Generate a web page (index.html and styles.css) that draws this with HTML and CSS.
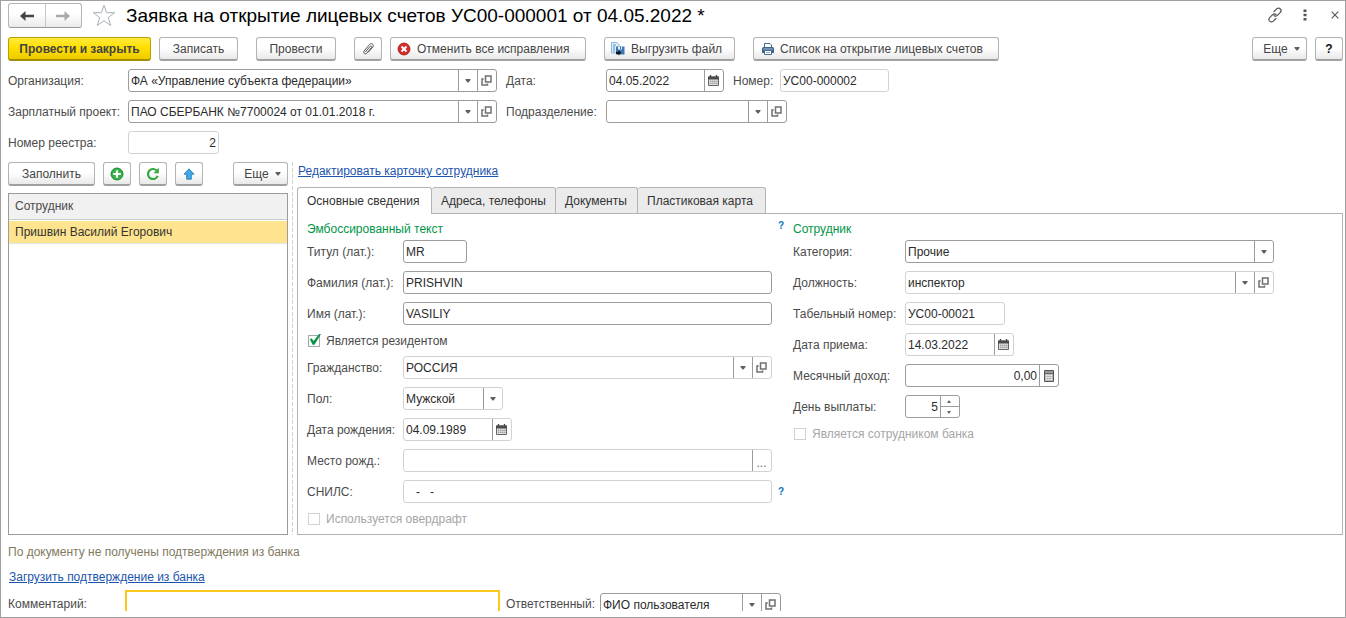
FILE: index.html
```html
<!DOCTYPE html>
<html lang="ru">
<head>
<meta charset="utf-8">
<title>Заявка на открытие лицевых счетов</title>
<link rel="stylesheet" href="styles.css">
</head>
<body>
<svg class="sprite" aria-hidden="true">
  <symbol id="i-down" viewBox="0 0 6 4"><path d="M.5 0h5v1L3.500 3.500h-1L.5 1z" fill="#606060"/></symbol>
  <symbol id="i-open" viewBox="0 0 11 11"><path d="M4.500 1h5.500v6H4.500z" fill="none" stroke="#707070" stroke-width="1.500"/><path d="M2.700 4H1v6h5.500V8.600" fill="none" stroke="#707070" stroke-width="1.500"/></symbol>
  <symbol id="i-cal" viewBox="0 0 11 11"><path d="M.5 2h10v8.500H.5z" fill="#ddd" stroke="#666"/><path d="M0 1.500h11V4.500H0z" fill="#4c4c4c"/><path d="M2.500 0v2M8.500 0v2" stroke="#4c4c4c" stroke-width="1.400"/><path d="M2 6.300h7.500M2 8.400h7.500" stroke="#999" stroke-width="1.200" stroke-dasharray="1.300 .8"/></symbol>
  <symbol id="i-calc" viewBox="0 0 10 12"><path d="M.5.5h9v11h-9z" fill="#bbb" stroke="#555"/><path d="M1 1h8v2.500H1z" fill="#999"/><path d="M0 3.500h10" stroke="#555" stroke-width=".8"/><path d="M2 5.500h6M2 7.500h6M2 9.500h6" stroke="#f4f4f4" stroke-width="1.200" stroke-dasharray="1.400 .9"/></symbol>
</svg>

<main class="window">
  <header class="titlebar">
    <div class="nav">
      <button type="button" aria-label="Назад"><svg width="16" height="12" viewBox="0 0 16 12"><path d="M1 6L6.500 1v3.700H15v2.600H6.500V11z" fill="#444"/></svg></button>
      <button type="button" aria-label="Вперед"><svg width="16" height="12" viewBox="0 0 16 12"><path d="M15 6L9.500 1v3.700H1v2.600h8.500V11z" fill="#aaa"/></svg></button>
    </div>
    <button type="button" class="plain star" aria-label="В избранное"><svg width="24" height="23" viewBox="0 0 24 23"><path d="M12 1.300l2.600 7.400h8l-6.300 4.900 2.400 7.900L12 16.800l-6.700 4.700 2.400-7.900L1.400 8.700h8z" fill="#fff" stroke="#a9b0ba"/></svg></button>
    <h1>Заявка на открытие лицевых счетов УС00-000001 от 04.05.2022 *</h1>
    <div class="window-tools">
      <button type="button" class="plain" aria-label="Ссылка"><svg width="16" height="16" viewBox="0 0 16 16"><g fill="none" stroke="#555" stroke-width="1.200" stroke-linecap="round"><path d="M7 4.500L9.700 1.900c1.200-1.200 2.700-1 3.600-.1s1.100 2.400 0 3.600L10.400 8.300c-1 1-2.500 1-3.400.2"/><path d="M9 11.500L6.300 14.100c-1.200 1.200-2.700 1-3.600.1s-1.100-2.400 0-3.600L5.600 7.700c1-1 2.500-1 3.400-.2"/></g></svg></button>
      <button type="button" class="plain" aria-label="Меню"><svg width="4" height="12" viewBox="0 0 4 12"><path d="M.5.5h3v2.500h-3zM.5 4.700h3v2.500h-3zM.5 9h3v2.500h-3z" fill="#555"/></svg></button>
      <button type="button" class="plain close" aria-label="Закрыть"><svg width="8" height="8" viewBox="0 0 8 8"><path d="M.7.7l6.600 6.600M7.300.7L.7 7.300" stroke="#555" stroke-width="1.100"/></svg></button>
    </div>
  </header>

  <div class="commands">
    <div class="group">
      <button type="button" class="btn primary">Провести и закрыть</button>
      <button type="button" class="btn w79">Записать</button>
    </div>
    <button type="button" class="btn w80">Провести</button>
    <div class="group">
      <button type="button" class="btn w28" aria-label="Файлы"><svg width="12" height="14" viewBox="0 0 12 14"><path d="M3.500 9.800l4.700-5.500c.8-1 2.200.1 1.400 1.100L4.800 11.200c-1.500 1.800-4.200-.3-2.700-2.200l5.400-6.500c2-2.300 5.200.3 3.300 2.600L6.500 10" fill="none" stroke="#555" stroke-linecap="round"/></svg></button>
      <button type="button" class="btn cancel"><svg width="14" height="14" viewBox="0 0 14 14"><circle cx="7" cy="7" r="6" fill="#d42b2b" stroke="#a31616" stroke-width=".8"/><path d="M4.500 4.500l5 5M9.500 4.500l-5 5" stroke="#fff" stroke-width="2"/></svg>Отменить все исправления</button>
    </div>
    <button type="button" class="btn export"><svg width="14" height="14" viewBox="0 0 14 14"><path d="M.5.5H6l2 2V11H.5z" fill="#dcecf8" stroke="#8fb4d4"/><path d="M2 3h3M2 5h2M2 7h2M2 9h2" stroke="#5b93c4"/><path d="M5 4.500h8.500v8H5z" fill="#3c78b4"/><path d="M7 4.500h4v3H7z" fill="#e6f1fa"/><path d="M9.500 4.500v2.500" stroke="#2f6ca8"/><path d="M5 9.700h2.500V8.200l2.800 2.600-2.800 2.700V12H5z" fill="#111"/></svg>Выгрузить файл</button>
    <button type="button" class="btn print"><svg width="12" height="12" viewBox="0 0 12 12"><path d="M2.500 4V.5h5.500l1.500 1.500V4" fill="#fff" stroke="#49698c"/><path d="M0 5.500Q0 4 1.500 4h9Q12 4 12 5.500V10H0z" fill="#3c6490"/><path d="M1.500 6h9" stroke="#a9c2dc"/><path d="M2.500 7.500h7v4h-7z" fill="#fff" stroke="#49698c"/><path d="M4 9.500h4" stroke="#8ba5c0"/></svg>Список на открытие лицевых счетов</button>
    <div class="group end">
      <button type="button" class="btn more">Еще <svg width="6" height="4"><use href="#i-down"/></svg></button>
      <button type="button" class="btn w28 help-btn">?</button>
    </div>
  </div>

  <section class="head-form">
    <label for="org">Организация:</label>
    <div class="field"><input id="org" value="ФА «Управление субъекта федерации»"><button type="button" aria-label="Выбрать"><svg width="6" height="4"><use href="#i-down"/></svg></button><button type="button" aria-label="Открыть"><svg width="11" height="11"><use href="#i-open"/></svg></button></div>
    <label for="date" class="second">Дата:</label>
    <div class="inline">
      <div class="field w118"><input id="date" value="04.05.2022"><button type="button" aria-label="Календарь"><svg width="11" height="11"><use href="#i-cal"/></svg></button></div>
      <label for="num">Номер:</label>
      <div class="field soft w109"><input id="num" value="УС00-000002"></div>
    </div>

    <label for="proj">Зарплатный проект:</label>
    <div class="field"><input id="proj" value="ПАО СБЕРБАНК №7700024 от 01.01.2018 г."><button type="button" aria-label="Выбрать"><svg width="6" height="4"><use href="#i-down"/></svg></button><button type="button" aria-label="Открыть"><svg width="11" height="11"><use href="#i-open"/></svg></button></div>
    <label for="dept" class="second">Подразделение:</label>
    <div class="field w181"><input id="dept"><button type="button" aria-label="Выбрать"><svg width="6" height="4"><use href="#i-down"/></svg></button><button type="button" aria-label="Открыть"><svg width="11" height="11"><use href="#i-open"/></svg></button></div>

    <label for="reg">Номер реестра:</label>
    <div class="field soft w91"><input id="reg" class="num" value="2"></div>
  </section>

  <section class="work">
    <div class="staff">
      <div class="staff-tools">
        <button type="button" class="btn fill">Заполнить</button>
        <button type="button" class="btn w28" aria-label="Добавить"><svg width="14" height="14" viewBox="0 0 14 14"><circle cx="7" cy="7" r="6" fill="#35b045" stroke="#1c8a30"/><path d="M7 3.200v7.600M3.200 7h7.600" stroke="#fff" stroke-width="2.200"/></svg></button>
        <button type="button" class="btn w28" aria-label="Обновить"><svg width="14" height="14" viewBox="0 0 14 14"><path d="M10.400 3.300A5 5 0 1 0 11.700 8.800" fill="none" stroke="#31a93f" stroke-width="2.200"/><path d="M12.800.8v5.400H7.500z" fill="#31a93f"/></svg></button>
        <button type="button" class="btn w28" aria-label="Вверх"><svg width="12" height="12" viewBox="0 0 12 12"><path d="M6 .8l5 5.400H8.300v5H3.700v-5H1z" fill="#3fa9ea" stroke="#2c7fb8" stroke-width=".9"/></svg></button>
        <button type="button" class="btn more end">Еще <svg width="6" height="4"><use href="#i-down"/></svg></button>
      </div>
      <div class="list">
        <table>
          <thead><tr><th scope="col">Сотрудник</th></tr></thead>
          <tbody><tr><td>Пришвин Василий Егорович</td></tr></tbody>
        </table>
      </div>
    </div>
    <div class="splitter"></div>
    <div class="card">
      <a href="#card" class="card-link">Редактировать карточку сотрудника</a>
      <div class="tabs" role="tablist">
        <button type="button" role="tab" aria-selected="true" class="tab active">Основные сведения</button>
        <button type="button" role="tab" aria-selected="false" class="tab phones">Адреса, телефоны</button>
        <button type="button" role="tab" aria-selected="false" class="tab docs">Документы</button>
        <button type="button" role="tab" aria-selected="false" class="tab plastic">Пластиковая карта</button>
      </div>
      <div class="panel" id="card" role="tabpanel">
        <div class="col left">
          <div class="heading"><h2>Эмбоссированный текст</h2><button type="button" class="plain hint">?</button></div>
          <div class="row"><label for="title">Титул (лат.):</label><div class="field w64"><input id="title" value="MR"></div></div>
          <div class="row"><label for="last">Фамилия (лат.):</label><div class="field"><input id="last" value="PRISHVIN"></div></div>
          <div class="row"><label for="first">Имя (лат.):</label><div class="field"><input id="first" value="VASILIY"></div></div>
          <label class="check"><input type="checkbox" checked>Является резидентом</label>
          <div class="row"><label for="country">Гражданство:</label><div class="field soft"><input id="country" value="РОССИЯ"><button type="button" aria-label="Выбрать"><svg width="6" height="4"><use href="#i-down"/></svg></button><button type="button" aria-label="Открыть"><svg width="11" height="11"><use href="#i-open"/></svg></button></div></div>
          <div class="row"><label for="sex">Пол:</label><div class="field soft w100"><select id="sex"><option>Мужской</option><option>Женский</option></select><span class="drop"><svg width="6" height="4"><use href="#i-down"/></svg></span></div></div>
          <div class="row"><label for="birth">Дата рождения:</label><div class="field soft w109"><input id="birth" value="04.09.1989"><button type="button" aria-label="Календарь"><svg width="11" height="11"><use href="#i-cal"/></svg></button></div></div>
          <div class="row"><label for="place">Место рожд.:</label><div class="field soft"><input id="place"><button type="button" class="dots" aria-label="Изменить">...</button></div></div>
          <div class="row"><label for="snils">СНИЛС:</label><div class="field soft"><input id="snils" value="   -   -"></div><button type="button" class="plain hint">?</button></div>
          <label class="check off"><input type="checkbox" disabled>Используется овердрафт</label>
        </div>
        <div class="col right">
          <div class="heading"><h2>Сотрудник</h2></div>
          <div class="row"><label for="cat">Категория:</label><div class="field"><select id="cat"><option>Прочие</option></select><span class="drop"><svg width="6" height="4"><use href="#i-down"/></svg></span></div></div>
          <div class="row"><label for="pos">Должность:</label><div class="field soft"><input id="pos" value="инспектор"><button type="button" aria-label="Выбрать"><svg width="6" height="4"><use href="#i-down"/></svg></button><button type="button" aria-label="Открыть"><svg width="11" height="11"><use href="#i-open"/></svg></button></div></div>
          <div class="row"><label for="tab">Табельный номер:</label><div class="field soft w100"><input id="tab" value="УС00-00021"></div></div>
          <div class="row"><label for="hired">Дата приема:</label><div class="field soft w109"><input id="hired" value="14.03.2022"><button type="button" aria-label="Календарь"><svg width="11" height="11"><use href="#i-cal"/></svg></button></div></div>
          <div class="row"><label for="income">Месячный доход:</label><div class="field w154"><input id="income" class="num" value="0,00"><button type="button" aria-label="Калькулятор"><svg width="10" height="12"><use href="#i-calc"/></svg></button></div></div>
          <div class="row"><label for="payday">День выплаты:</label><div class="field w55"><input id="payday" class="num" value="5"><div class="spin"><button type="button" aria-label="Больше"><svg width="4" height="3" viewBox="0 0 4 3"><path d="M2 0l2 3H0z" fill="#666"/></svg></button><button type="button" aria-label="Меньше"><svg width="4" height="3" viewBox="0 0 4 3"><path d="M2 3L0 0h4z" fill="#666"/></svg></button></div></div></div>
          <label class="check off"><input type="checkbox" disabled>Является сотрудником банка</label>
        </div>
      </div>
    </div>
  </section>

  <footer class="bottom">
    <p>По документу не получены подтверждения из банка</p>
    <a href="#load">Загрузить подтверждение из банка</a>
    <div class="bottom-row">
      <label for="comment">Комментарий:</label>
      <input id="comment" class="comment">
      <label for="resp" class="resp">Ответственный:</label>
      <div class="field w181"><input id="resp" value="ФИО пользователя"><button type="button" aria-label="Выбрать"><svg width="6" height="4"><use href="#i-down"/></svg></button><button type="button" aria-label="Открыть"><svg width="11" height="11"><use href="#i-open"/></svg></button></div>
    </div>
  </footer>
</main>
</body>
</html>
```
FILE: styles.css
```css
* { box-sizing: border-box; }
body {
  margin: 0;
  background: #fff;
  color: #4b4b4b;
  font: 12px/16px "Liberation Sans", Arial, sans-serif;
}
button, input, select { font: inherit; color: inherit; margin: 0; }
button { cursor: pointer; white-space: nowrap; }
svg { display: block; flex: none; }
h1, h2, p { margin: 0; font-weight: normal; }
a { color: #1c55ae; }
label { white-space: nowrap; }
.sprite { position: absolute; width: 0; height: 0; }

.window {
  display: flex;
  flex-direction: column;
  min-height: 100vh;
  padding: 2px 2px 6px 7px;
  border: 1px solid #a0a0a0;
}

/* Title */
.titlebar { display: flex; align-items: center; height: 25px; }
.nav { display: flex; border: 1px solid #b5b5b5; border-bottom-color: #999; border-radius: 3px; width: 74px; height: 25px; background: linear-gradient(#fff 40%, #ebebeb); }
.nav button { flex: 1; display: flex; align-items: center; justify-content: center; padding: 0; border: 0; background: none; }
.nav button + button { border-left: 1px solid #c8c8c8; }
.plain { border: 0; padding: 0; background: none; }
.star { margin: 0 10px 0 10px; }
h1 { font-size: 19px; line-height: 24px; color: #000; white-space: nowrap; }
.window-tools { display: flex; align-items: center; gap: 20px; margin-left: auto; padding: 0 4px 2px 0; }
.close { margin-left: 4px; }

/* Command bar */
.commands { display: flex; gap: 18px; margin-top: 9px; }
.group { display: flex; gap: 8px; }
.end { margin-left: auto; }
.btn {
  display: flex;
  align-items: center;
  justify-content: center;
  gap: 6px;
  height: 24px;
  padding: 0 4px;
  border: 1px solid #b3b3b3;
  border-bottom: 2px solid #a0a0a0;
  border-radius: 3px;
  background: linear-gradient(#fff 45%, #e9e9e9);
  color: #444;
}
.primary { width: 143px; font-weight: bold; background: linear-gradient(#ffea3d, #ffe000 45%, #efcb00); border-color: #b8a000; border-bottom-color: #a38e00; }
.w79 { width: 79px; }
.w80 { width: 80px; }
.w28 { width: 28px; }
.cancel, .export, .print { justify-content: flex-start; padding-left: 6px; }
.cancel { width: 196px; }
.export { width: 131px; }
.print { width: 246px; padding-left: 8px; }
.more { width: 55px; padding-left: 8px; }
.fill { width: 87px; }
.help-btn { font-weight: bold; color: #111; }

/* Fields */
.field {
  display: flex;
  width: 100%;
  height: 23px;
  border: 1px solid #9c9c9c;
  border-radius: 3px;
  background: #fff;
  color: #2b2b2b;
}
.soft { border-color: #d2d2d2; }
.field input, .field select {
  flex: 1;
  min-width: 0;
  width: 0;
  padding: 0 2px;
  border: 0;
  outline: 0;
  background: none;
  appearance: none;
}
.field > button, .drop {
  display: flex;
  align-items: center;
  justify-content: center;
  flex: none;
  width: 19px;
  padding: 0 1px 0 0;
  border: 0;
  border-left: 1px solid #9c9c9c;
  background: none;
}
.field > .dots { align-items: flex-end; color: #666; }
.field .num { text-align: right; padding-right: 2px; }
.spin { display: flex; flex-direction: column; width: 19px; border-left: 1px solid #9c9c9c; }
.spin button { flex: 1; display: flex; align-items: center; justify-content: center; padding: 0 2px 0 0; border: 0; background: none; }
.spin button + button { border-top: 1px solid #9c9c9c; }
.w55 { width: 55px; }
.w64 { width: 64px; }
.w91 { width: 91px; }
.w100 { width: 100px; }
.w109 { width: 109px; }
.w118 { width: 118px; }
.w154 { width: 154px; }
.w181 { width: 181px; }

.head-form {
  display: grid;
  grid-template-columns: 120px 369px 109px 1fr;
  row-gap: 8px;
  align-items: center;
  margin-top: 8px;
}
.second { padding-left: 9px; }
.inline { display: flex; align-items: center; }
.inline label { width: 56px; padding-left: 9px; }

/* Work area */
.work { flex: 1; display: grid; grid-template-columns: 280px 9px 1fr; margin-top: 8px; }
.staff { display: flex; flex-direction: column; }
.staff-tools { display: flex; gap: 8px; }
.list { flex: 1; margin-top: 7px; border: 1px solid #9c9c9c; }
.list table { width: 100%; border-spacing: 0; }
.list th, .list td { padding: 0 6px; text-align: left; font-weight: normal; }
.list th { height: 26px; padding-bottom: 1px; background: #f1f1f1; border-bottom: 1px solid #ccc; }
.list td { height: 24px; background: #ffe48f; color: #333; border-top: 1px solid #fff; border-bottom: 1px solid #e4e4e4; }
.splitter {
  width: 1px;
  margin-left: 4px;
  background: repeating-linear-gradient(#cfcfcf 0 4px, #fff 4px 6px);
}
.card { display: flex; flex-direction: column; min-width: 0; }
.card-link { align-self: flex-start; height: 25px; padding: 1px; }
.tabs { display: flex; }
.tab {
  height: 26px;
  padding: 0 0 0 9px;
  text-align: left;
  border: 1px solid #b3b3b3;
  border-left-width: 0;
  border-bottom: 0;
  border-radius: 3px 3px 0 0;
  background: #ebebeb;
  color: #333;
}
.tab.active { width: 135px; border-left-width: 1px; background: #fff; z-index: 1; margin-bottom: -1px; height: 27px; }
.phones { width: 124px; }
.docs { width: 82px; }
.plastic { width: 128px; }
.panel {
  flex: 1;
  display: flex;
  gap: 6px;
  padding: 7px 9px 8px;
  border: 1px solid #b3b3b3;
}
.col { display: flex; flex-direction: column; gap: 8px; }
.left { width: 480px; }
.right { width: 481px; }
.heading { display: flex; justify-content: space-between; height: 16px; margin-bottom: -5px; }
h2 { font-size: 12px; line-height: 16px; color: #009646; }
.hint { color: #0a76bd; font-size: 10px; line-height: 10px; font-weight: bold; width: 6px; height: 10px; margin-right: 3px; }
.row { display: grid; grid-template-columns: 96px 369px 12px; align-items: center; }
.row > * { justify-self: start; }
.row .hint { justify-self: end; margin-right: 0; }
.right .row { grid-template-columns: 112px 369px; }
.check { display: flex; align-items: center; gap: 6px; height: 15px; align-self: flex-start; }
.check input {
  appearance: none;
  width: 12px;
  height: 12px;
  margin-left: 1px;
  border: 1px solid #a6a6a6;
  background: #fff;
}
.check input:checked { position: relative; }
.check input:checked::after {
  content: "";
  position: absolute;
  left: 0;
  top: -2px;
  width: 12px;
  height: 12px;
  background: #0a9648;
  clip-path: polygon(6% 46%, 24% 42%, 38% 62%, 84% 4%, 100% 4%, 46% 94%, 30% 94%);
}
.off { color: #a6a6a6; }
.off input { border-color: #d2d2d2; }

/* Bottom */
.bottom { display: flex; flex-direction: column; align-items: flex-start; padding-top: 9px; }
.bottom p { color: #7f7a5e; }
.bottom > a { margin: 9px 0 5px 1px; }
.bottom-row { display: flex; height: 21px; overflow: hidden; width: 100%; }
.bottom-row label { width: 117px; padding-top: 6px; }
.bottom-row .resp { width: 100px; padding-left: 6px; }
.comment { width: 375px; height: 29px; border: 2px solid #fcc71c; outline: 0; }
.bottom-row .field { margin-top: 3px; }
```
